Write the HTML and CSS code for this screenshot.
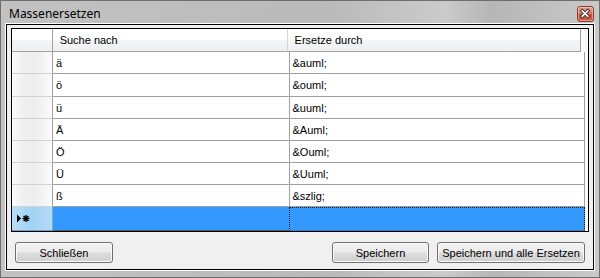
FILE: index.html
```html
<!DOCTYPE html>
<html lang="de">
<head>
<meta charset="utf-8">
<title>Massenersetzen</title>
<link rel="stylesheet" href="styles.css">
</head>
<body>
<div class="window">
  <div class="titlebar">
    <span class="title">Massenersetzen</span>
    <div class="close">
      <svg width="17" height="16" viewBox="0 0 17 16">
        <path d="M5.5 4.5 L11.5 10.5 M11.5 4.5 L5.5 10.5" stroke="#3a3a3a" stroke-width="3.6" stroke-linecap="square"/>
        <path d="M5.5 4.5 L11.5 10.5 M11.5 4.5 L5.5 10.5" stroke="#ffffff" stroke-width="1.6" stroke-linecap="square"/>
      </svg>
    </div>
  </div>
  <div class="client-frame">
    <div class="client">
      <div class="grid">
        <div class="row head">
          <div class="cell rh"></div>
          <div class="cell c1">Suche nach</div>
          <div class="cell c2">Ersetze durch</div>
          <div class="cell fill"></div>
        </div>
        <div class="row"><div class="cell rh"></div><div class="cell c1">ä</div><div class="cell c2">&amp;auml;</div><div class="cell fill"></div></div>
        <div class="row"><div class="cell rh"></div><div class="cell c1">ö</div><div class="cell c2">&amp;ouml;</div><div class="cell fill"></div></div>
        <div class="row"><div class="cell rh"></div><div class="cell c1">ü</div><div class="cell c2">&amp;uuml;</div><div class="cell fill"></div></div>
        <div class="row"><div class="cell rh"></div><div class="cell c1">Ä</div><div class="cell c2">&amp;Auml;</div><div class="cell fill"></div></div>
        <div class="row"><div class="cell rh"></div><div class="cell c1">Ö</div><div class="cell c2">&amp;Ouml;</div><div class="cell fill"></div></div>
        <div class="row"><div class="cell rh"></div><div class="cell c1">Ü</div><div class="cell c2">&amp;Uuml;</div><div class="cell fill"></div></div>
        <div class="row"><div class="cell rh"></div><div class="cell c1">ß</div><div class="cell c2">&amp;szlig;</div><div class="cell fill"></div></div>
        <div class="row new">
          <div class="cell rh">
            <svg width="14" height="9" viewBox="0 0 14 9">
              <polygon points="0,0.5 4,4.5 0,8.5" fill="#000"/>
              <path d="M9 1 V8 M5.5 4.5 H12.5 M6.6 2 L11.4 7 M11.4 2 L6.6 7" stroke="#000" stroke-width="1.3"/>
            </svg>
          </div>
          <div class="cell c1"></div>
          <div class="cell c2 focus"></div>
          <div class="cell fill"></div>
        </div>
      </div>
      <div class="buttons">
        <button class="btn b-close">Schließen</button>
        <div class="spacer"></div>
        <button class="btn b-save">Speichern</button>
        <button class="btn b-all">Speichern und alle Ersetzen</button>
      </div>
    </div>
  </div>
</div>
</body>
</html>
```

FILE: styles.css
```css
html, body {
  margin: 0;
  padding: 0;
  background: #ffffff;
}

body {
  font-family: "Liberation Sans", Arial, sans-serif;
  font-size: 11px;
  color: #000;
}

.window {
  width: 600px;
  height: 278px;
  box-sizing: border-box;
  border: 1px solid #6e6e6e;
  background: linear-gradient(to right, #c2c2c2 0%, #bababa 55%, #cbcbcb 74%, #b6b6b6 82%, #c9c9c9 100%);
  padding: 0 4px 6px 4px;
  display: flex;
  flex-direction: column;
}

.titlebar {
  height: 22px;
  flex: none;
  display: flex;
  align-items: center;
  justify-content: space-between;
  padding-left: 4px;
}

.title {
  font-family: "Noto Sans", "Open Sans", sans-serif;
  font-size: 12px;
  color: #000;
  position: relative;
  top: 1px;
}

.close {
  width: 17px;
  height: 16px;
  box-sizing: border-box;
  margin-right: 1px;
  margin-top: 3px;
  border: 1px solid #8a3a2c;
  border-radius: 3px;
  background: linear-gradient(#e9a493 0%, #d77a63 45%, #c8482c 55%, #d0604a 100%);
  box-shadow: inset 0 0 0 1px rgba(255, 220, 210, 0.5);
  display: flex;
}

.close svg {
  margin: -1px 0 0 -1px;
}

.client-frame {
  flex: none;
  height: 248px;
  box-sizing: border-box;
  border: 1px solid #ffffff;
}

.client {
  height: 246px;
  box-sizing: border-box;
  border: 1px solid #000;
  background: #f0f0f0;
  padding: 3px 4px 6px 4px;
  display: flex;
  flex-direction: column;
}

.grid {
  height: 204px;
  flex: none;
  box-sizing: border-box;
  border: 1px solid #000;
  background: #fff;
  display: flex;
  flex-direction: column;
}

.row {
  display: flex;
  height: 22px;
  flex: none;
}

.row.head { height: 23px; }
.row:nth-child(3) { height: 23px; }
.row.new { height: 24px; }

.cell {
  box-sizing: border-box;
  height: 100%;
  display: flex;
  align-items: center;
  border-right: 1px solid #a0a0a0;
  border-bottom: 1px solid #a0a0a0;
  padding-left: 3px;
  white-space: nowrap;
}

.rh {
  width: 41px;
  padding-left: 0;
  background: linear-gradient(to right, #fbfbfb 0%, #efefef 30%, #eeeeee 60%, #fbfbfb 100%);
  border-bottom-color: #d2d2d2;
  border-right-color: #a0a0a0;
}

.c1 { width: 237px; }
.c2 { width: 296px; }

.fill {
  flex: 1;
  border: none;
  background: #fff;
}

.row.head .cell {
  background: linear-gradient(#ffffff 0%, #ffffff 48%, #f3f4f6 52%, #eff0f2 100%);
  border-bottom-color: #a0a0a0;
  padding-left: 7px;
}

.row.head .c1 { border-right-color: #d5d5d5; }
.row.head .rh { padding-left: 0; border-right-color: #a0a0a0; }
.row.head .fill { background: #fafafa; }

.row.new .rh {
  background: linear-gradient(to right, #b9def8 0%, #a2d2f4 50%, #b3dbf7 100%);
  border-bottom-color: #6a9ec6;
  border-right-color: #7ea9c9;
  padding-left: 5px;
}

.row.new .c1,
.row.new .c2 {
  background: #3399ff;
  border-bottom-color: #5a5a5a;
}

.row.new .c1 { border-right: none; width: 236px; }

.focus {
  border: 1px dotted #1a1a1a;
}

.row.new .fill { background: #fff; }

.buttons {
  display: flex;
  margin-top: 10px;
  padding: 0 4px;
  height: 21px;
  flex: none;
  gap: 8px;
}

.spacer { flex: 1; }

.btn {
  height: 21px;
  box-sizing: border-box;
  border: 1px solid #707070;
  border-radius: 3px;
  background: linear-gradient(#f2f2f2 0%, #ebebeb 48%, #dddddd 52%, #cfcfcf 100%);
  box-shadow: inset 0 0 0 1px #fbfbfb;
  font-family: "Liberation Sans", Arial, sans-serif;
  font-size: 11px;
  color: #000;
  padding: 0;
  margin: 0;
}

.b-close { width: 98px; }
.b-save { width: 97px; }
.b-all { width: 148px; }
```
